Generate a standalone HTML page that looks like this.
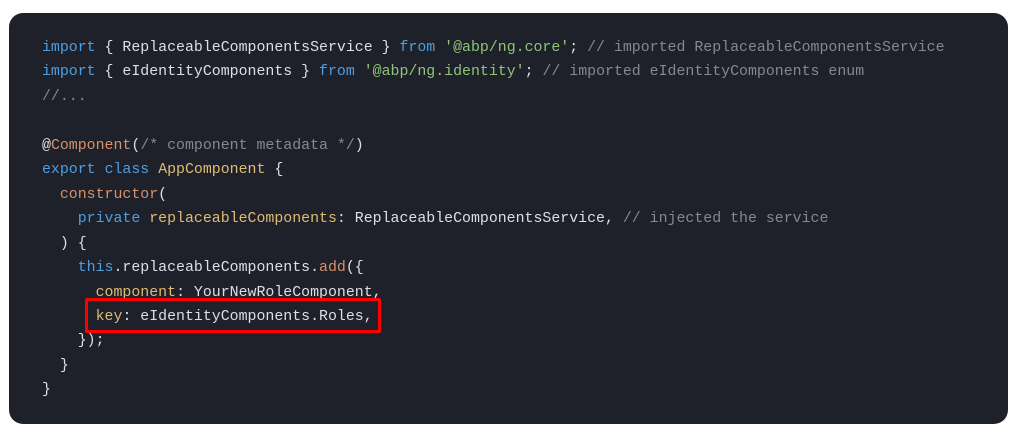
<!DOCTYPE html>
<html><head><style>
body{margin:0;background:#fff;width:1018px;height:439px;overflow:hidden}
.box{position:absolute;left:9px;top:13px;width:999px;height:411px;background:#1e2129;border-radius:14px}
pre{position:absolute;left:42px;top:36px;margin:0;font-family:"Liberation Mono",monospace;font-size:14.9px;line-height:24.45px;color:#dcdfe4}
.k{color:#4d9ee0}.s{color:#8fc37a}.c{color:#838891}.o{color:#d7916a}.y{color:#e0bb73}
.red{position:absolute;left:85px;top:298px;width:290px;height:29px;border:3px solid #f00;border-radius:2px}
</style></head><body>
<div class="box"></div>
<pre><span class="k">import</span> { ReplaceableComponentsService } <span class="k">from</span> <span class="s">'@abp/ng.core'</span>; <span class="c">// imported ReplaceableComponentsService</span>
<span class="k">import</span> { eIdentityComponents } <span class="k">from</span> <span class="s">'@abp/ng.identity'</span>; <span class="c">// imported eIdentityComponents enum</span>
<span class="c">//...</span>

@<span class="o">Component</span>(<span class="c">/* component metadata */</span>)
<span class="k">export</span> <span class="k">class</span> <span class="y">AppComponent</span> {
  <span class="o">constructor</span>(
    <span class="k">private</span> <span class="y">replaceableComponents</span>: ReplaceableComponentsService, <span class="c">// injected the service</span>
  ) {
    <span class="k">this</span>.replaceableComponents.<span class="o">add</span>({
      <span class="y">component</span>: YourNewRoleComponent,
      <span class="y">key</span>: eIdentityComponents.Roles,
    });
  }
}</pre>
<div class="red"></div>
</body></html>
